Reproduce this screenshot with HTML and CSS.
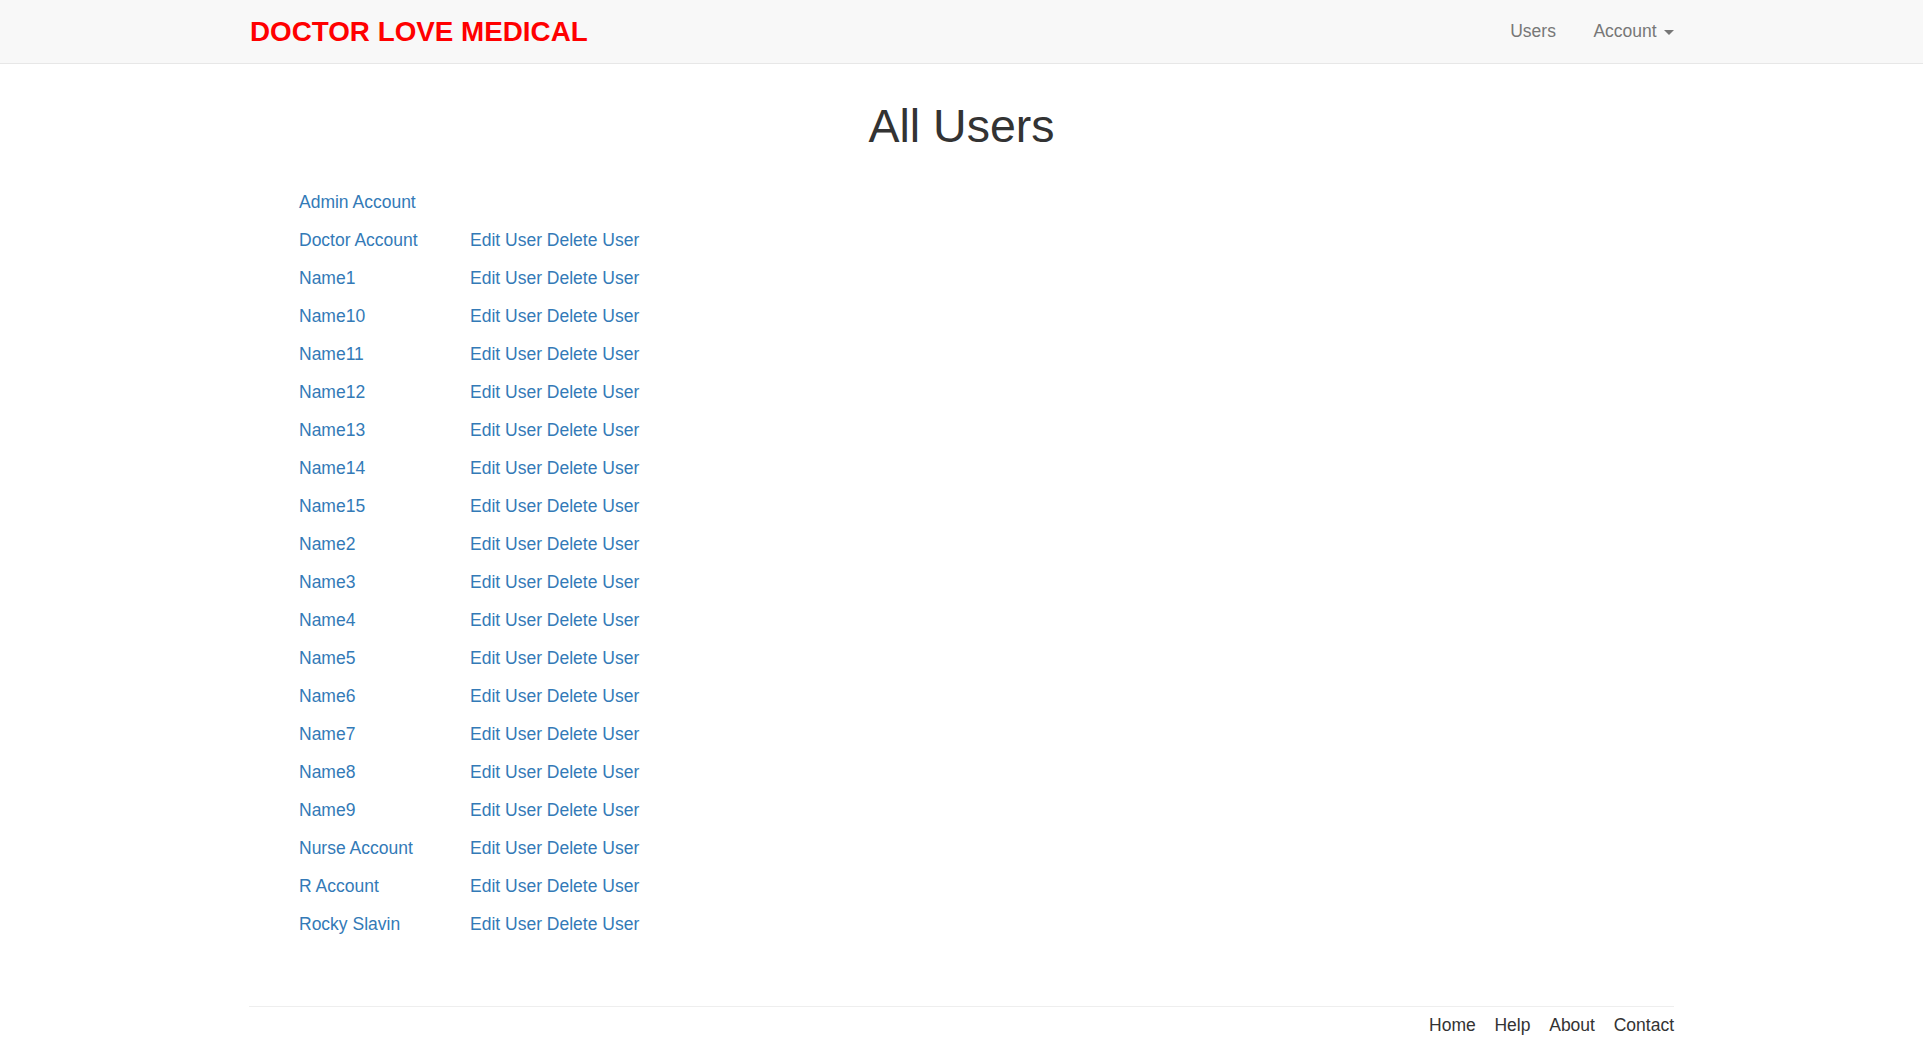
FILE: index.html
```html
<!DOCTYPE html>
<html lang="en">
<head>
<meta charset="utf-8">
<title>All Users - Doctor Love Medical</title>
<link rel="stylesheet" href="styles.css">
</head>
<body>
<nav class="navbar">
  <div class="container navbar-inner">
    <a class="brand" href="#">DOCTOR LOVE MEDICAL</a>
    <ul class="nav">
      <li><a href="#">Users</a></li>
      <li><a href="#">Account <span class="caret"></span></a></li>
    </ul>
  </div>
</nav>
<main class="container">
  <h1 class="title">All Users</h1>
  <div class="users">
    <div class="user-row"><a href="#">Admin Account</a><span></span></div>
    <div class="user-row"><a href="#">Doctor Account</a><span><a href="#">Edit User</a> <a href="#">Delete User</a></span></div>
    <div class="user-row"><a href="#">Name1</a><span><a href="#">Edit User</a> <a href="#">Delete User</a></span></div>
    <div class="user-row"><a href="#">Name10</a><span><a href="#">Edit User</a> <a href="#">Delete User</a></span></div>
    <div class="user-row"><a href="#">Name11</a><span><a href="#">Edit User</a> <a href="#">Delete User</a></span></div>
    <div class="user-row"><a href="#">Name12</a><span><a href="#">Edit User</a> <a href="#">Delete User</a></span></div>
    <div class="user-row"><a href="#">Name13</a><span><a href="#">Edit User</a> <a href="#">Delete User</a></span></div>
    <div class="user-row"><a href="#">Name14</a><span><a href="#">Edit User</a> <a href="#">Delete User</a></span></div>
    <div class="user-row"><a href="#">Name15</a><span><a href="#">Edit User</a> <a href="#">Delete User</a></span></div>
    <div class="user-row"><a href="#">Name2</a><span><a href="#">Edit User</a> <a href="#">Delete User</a></span></div>
    <div class="user-row"><a href="#">Name3</a><span><a href="#">Edit User</a> <a href="#">Delete User</a></span></div>
    <div class="user-row"><a href="#">Name4</a><span><a href="#">Edit User</a> <a href="#">Delete User</a></span></div>
    <div class="user-row"><a href="#">Name5</a><span><a href="#">Edit User</a> <a href="#">Delete User</a></span></div>
    <div class="user-row"><a href="#">Name6</a><span><a href="#">Edit User</a> <a href="#">Delete User</a></span></div>
    <div class="user-row"><a href="#">Name7</a><span><a href="#">Edit User</a> <a href="#">Delete User</a></span></div>
    <div class="user-row"><a href="#">Name8</a><span><a href="#">Edit User</a> <a href="#">Delete User</a></span></div>
    <div class="user-row"><a href="#">Name9</a><span><a href="#">Edit User</a> <a href="#">Delete User</a></span></div>
    <div class="user-row"><a href="#">Nurse Account</a><span><a href="#">Edit User</a> <a href="#">Delete User</a></span></div>
    <div class="user-row"><a href="#">R Account</a><span><a href="#">Edit User</a> <a href="#">Delete User</a></span></div>
    <div class="user-row"><a href="#">Rocky Slavin</a><span><a href="#">Edit User</a> <a href="#">Delete User</a></span></div>
  </div>
  <footer class="footer">
    <ul class="footer-links">
      <li><a href="#">Home</a></li>
      <li><a href="#">Help</a></li>
      <li><a href="#">About</a></li>
      <li><a href="#">Contact</a></li>
    </ul>
  </footer>
</main>
</body>
</html>
```
FILE: styles.css
```css
* { box-sizing: border-box; }
html, body {
  margin: 0;
  padding: 0;
  background: #fff;
}
body {
  font-family: "Liberation Sans", Arial, Helvetica, sans-serif;
  font-size: 17.5px;
  line-height: 25px;
  color: #333;
}
a { text-decoration: none; color: #337ab7; }
ul { list-style: none; margin: 0; padding: 0; }

.container {
  width: 1425px;
  margin: 0 auto;
}

.navbar {
  height: 63.75px;
  background: #f8f8f8;
  border-bottom: 1.25px solid #e7e7e7;
}
.navbar-inner {
  height: 62.5px;
  display: flex;
  align-items: center;
  justify-content: space-between;
}
.brand {
  color: #ff0000;
  font-weight: bold;
  font-size: 27.8px;
  line-height: 62.5px;
  padding-top: 1px;
  margin-left: 1px;
}
.nav {
  display: flex;
  margin-right: -18.75px;
}
.nav a {
  display: block;
  color: #777;
  padding: 0 18.75px;
  line-height: 60.5px;
}
.caret {
  display: inline-block;
  width: 0;
  height: 0;
  margin-left: 2.5px;
  vertical-align: middle;
  border-top: 5px solid #777;
  border-left: 5px solid transparent;
  border-right: 5px solid transparent;
}

.title {
  margin: 38px 0 0;
  text-align: center;
  font-size: 46.5px;
  line-height: 49.5px;
  font-weight: 500;
  color: #333;
}

.users {
  margin-top: 32px;
  padding-left: 50px;
}
.user-row {
  display: grid;
  grid-template-columns: 171px auto;
  height: 38px;
  line-height: 38px;
}

.footer {
  margin-top: 62.5px;
  border-top: 1.25px solid #eee;
  padding-top: 6.5px;
}
.footer-links {
  display: flex;
  justify-content: flex-end;
  gap: 18.75px;
}
.footer-links a {
  color: #333;
  line-height: 25px;
}
```
